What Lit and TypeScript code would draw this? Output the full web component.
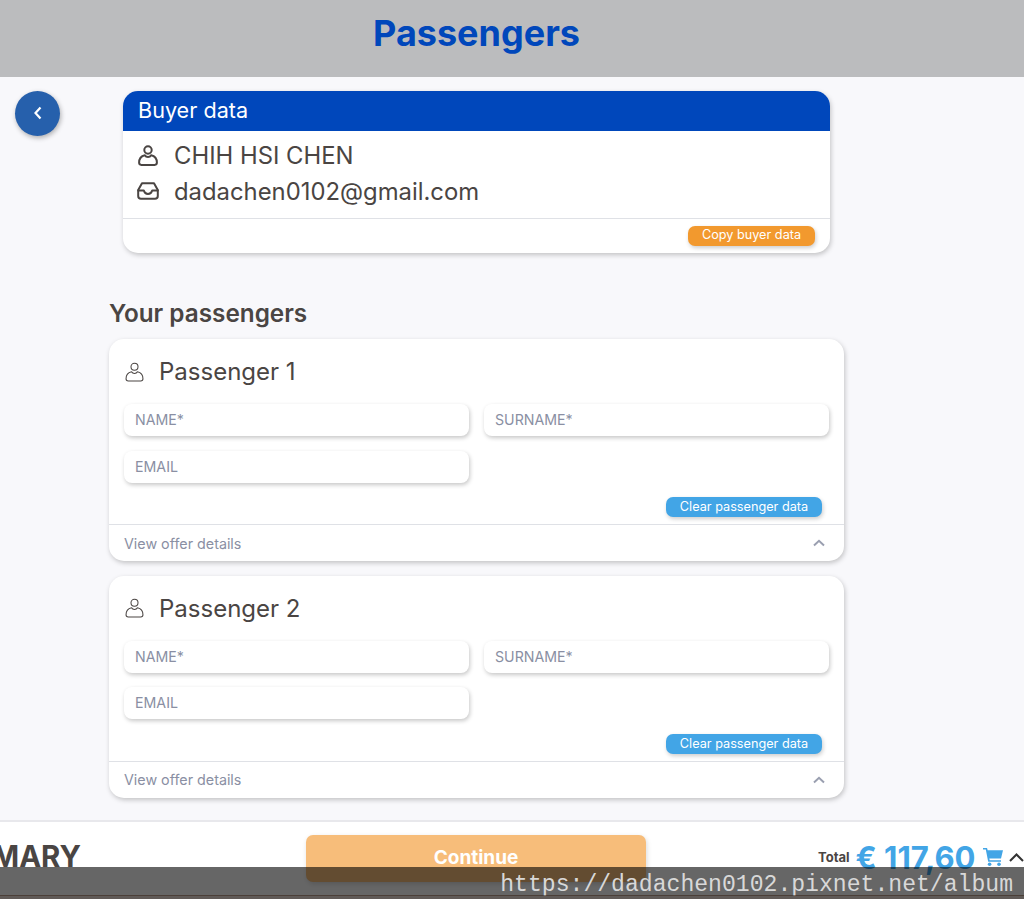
import { LitElement, html, css } from "lit";
import { customElement } from "lit/decorators.js";

const userIcon = (w: number, h: number, sw: number) => html`<svg class="ic" width=${w} height=${h} viewBox="0 0 20 21" fill="none" stroke="#4a4543" stroke-width=${sw} stroke-linejoin="round">
  <circle cx="10" cy="5" r="3.7"></circle>
  <path d="M6.9 10.2 C3.4 11 1.1 13.8 1.1 17.6 Q1.1 19.9 3.4 19.9 H16.6 Q18.9 19.9 18.9 17.6 C18.9 13.8 16.6 11 13.1 10.2 C11.8 12.6 8.2 12.6 6.9 10.2 Z"></path>
</svg>`;

const inboxIcon = html`<svg class="ic" width="22" height="18" viewBox="0 0 22 18" fill="none" stroke="#4a4543" stroke-width="2" stroke-linejoin="round" stroke-linecap="round">
  <path d="M5 1.2 H17 L20.8 8 V14 Q20.8 16.8 18 16.8 H4 Q1.2 16.8 1.2 14 V8 Z"></path>
  <path d="M1.2 8.5 H6.8 Q7.8 12 11 12 Q14.2 12 15.2 8.5 H20.8"></path>
</svg>`;

const chevUp = html`<svg width="12" height="8" viewBox="0 0 12 8" fill="none" stroke="#9a9fb0" stroke-width="2"><path d="M1 6.5 L6 1.8 L11 6.5"></path></svg>`;

const cartIcon = html`<svg width="20" height="18" viewBox="0 0 20 18" fill="#42a5e6">
  <path d="M0 0 H4 L4.7 2.2 H20 L18 10.5 H6.3 L6.7 12.2 H18 V13.8 H5.2 L2.8 1.6 H0 Z"></path>
  <circle cx="6.6" cy="16.2" r="1.8"></circle><circle cx="16" cy="16.2" r="1.8"></circle>
</svg>`;

@customElement("app-root")
export class AppRoot extends LitElement {
  static styles = css`
    :host { display: block; position: relative; height: 899px; overflow: hidden; background: #f8f8fb; color: #4a4543; font-family: Inter, "Liberation Sans", sans-serif; }
    .top { height: 77px; background: #bbbcbe; display: flex; align-items: center; justify-content: center; padding-right: 71px; padding-bottom: 11px; box-sizing: border-box; }
    .top h1 { margin: 0; font-size: 36px; font-weight: 700; color: #0047bb; line-height: 42px; }
    .main { display: flex; height: 743px; padding-top: 14px; box-sizing: border-box; }
    .gutter { width: 109px; padding-left: 15px; box-sizing: border-box; flex: none; }
    .back { width: 45px; height: 45px; border-radius: 50%; background: #2660ac; box-shadow: 1px 2px 5px rgba(0,0,0,.3); display: flex; align-items: center; justify-content: center; padding-bottom: 2px; box-sizing: border-box; }
    .col { width: 735px; flex: none; display: flex; flex-direction: column; }
    .buyer { margin: 0 14px; height: 162px; background: #fff; border-radius: 15px; box-shadow: 1px 2px 5px rgba(0,0,0,.22); overflow: hidden; display: flex; flex-direction: column; }
    .buyer-h { height: 40px; background: #0047bb; color: #fff; font-size: 21.6px; line-height: 39px; padding-left: 15px; }
    .buyer-b { flex: none; height: 88px; padding: 6px 15px 0; box-sizing: border-box; border-bottom: 1px solid #dfe1e6; }
    .line { display: flex; align-items: center; height: 36px; font-size: 23.85px; gap: 14px; }
    .line .slot { width: 22px; display: flex; justify-content: center; flex: none; margin-right: 1px; margin-left: -1px; }
    .buyer-f { flex: 1; display: flex; justify-content: flex-end; padding: 7px 15px 0 0; }
    .btn { height: 20px; border-radius: 7px; color: #fff; font-size: 12.7px; line-height: 18px; box-shadow: 1px 2px 4px rgba(0,0,0,.2); text-align: center; white-space: nowrap; }
    .orange { background: #f2992e; width: 127px; }
    .blue { background: #42a5e6; width: 156px; line-height: 19px; }
    h2 { margin: 45px 0 11px; font-size: 24.3px; line-height: 30px; font-weight: 600; }
    .card { background: #fff; border-radius: 15px; box-shadow: 1px 2px 5px rgba(0,0,0,.22); height: 222px; margin-bottom: 14.6px; display: flex; flex-direction: column; overflow: hidden; }
    .card-h { height: 65px; display: flex; align-items: center; padding-left: 16px; gap: 15px; font-size: 24px; flex: none; }
    .card-h .slot { width: 19px; display: flex; flex: none; }
    .fields { display: grid; grid-template-columns: 345px 345px; gap: 14.5px 15px; padding: 0 15px; }
    .field { height: 32px; border-radius: 8px; background: #fff; box-shadow: 1px 2px 4px rgba(0,0,0,.22); padding-left: 11px; font-size: 14.2px; line-height: 32.6px; color: #8a8fa3; }
    .act { display: flex; justify-content: flex-end; padding: 14.5px 22px 0 0; height: 41.5px; box-sizing: border-box; flex: none; }
    .offer { flex: 1; border-top: 1px solid #dfe1e6; display: flex; align-items: center; justify-content: space-between; padding: 0 19px 0 15px; font-size: 14.3px; color: #8a8fa3; }
    .foot { height: 79px; background: #fff; border-top: 2px solid #e8e8ec; box-sizing: border-box; display: flex; }
    .sum { width: 81px; flex: none; overflow: hidden; display: flex; justify-content: flex-end; font-size: 29.4px; font-weight: 700; line-height: 70px; white-space: nowrap; }
    .cta { margin: 13px 0 0 225px; width: 340px; height: 47px; background: #f7bd7a; border-radius: 7px; color: #fff; font-size: 19px; font-weight: 700; text-align: center; line-height: 46px; box-shadow: 1px 2px 5px rgba(0,0,0,.15); flex: none; }
    .total { margin-left: 172px; display: flex; align-items: center; height: 70px; white-space: nowrap; flex: none; }
    .total b { font-size: 13px; font-weight: 700; }
    .price { font-size: 31px; font-weight: 700; color: #42a5e6; margin: 0 8px 0 6px; }
    .cart { flex: none; display: flex; }
    .caret { flex: none; margin-left: 6px; }
    .mark { position: absolute; left: 0; right: 0; bottom: 0; height: 32px; background: rgba(0,0,0,.6); color: #d8d8d8; font-family: "Liberation Mono", monospace; font-size: 23.1px; line-height: 36px; text-align: right; padding-right: 11px; box-sizing: border-box; white-space: nowrap; }
    .mark::after { content: ""; position: absolute; left: 0; right: 0; bottom: 0; height: 4px; border-top: 1px solid rgba(50,30,20,.45); background: rgba(70,40,20,.18); box-sizing: border-box; }
  `;

  private passenger(n: number) {
    return html`<section class="card">
      <div class="card-h"><span class="slot">${userIcon(19, 20, 1.1)}</span>Passenger ${n}</div>
      <div class="fields">
        <div class="field">NAME*</div>
        <div class="field">SURNAME*</div>
        <div class="field">EMAIL</div>
      </div>
      <div class="act"><div class="btn blue">Clear passenger data</div></div>
      <div class="offer"><span>View offer details</span>${chevUp}</div>
    </section>`;
  }

  render() {
    return html`
      <header class="top"><h1>Passengers</h1></header>
      <div class="main">
        <div class="gutter"><div class="back"><svg width="10" height="14" viewBox="0 0 10 14" fill="none" stroke="#fff" stroke-width="2.2"><path d="M7.5 1.5 L2.5 7 L7.5 12.5"></path></svg></div></div>
        <div class="col">
          <section class="buyer">
            <div class="buyer-h">Buyer data</div>
            <div class="buyer-b">
              <div class="line"><span class="slot">${userIcon(20, 21, 2)}</span>CHIH HSI CHEN</div>
              <div class="line"><span class="slot">${inboxIcon}</span>dadachen0102@gmail.com</div>
            </div>
            <div class="buyer-f"><div class="btn orange">Copy buyer data</div></div>
          </section>
          <h2>Your passengers</h2>
          ${this.passenger(1)}
          ${this.passenger(2)}
        </div>
      </div>
      <footer class="foot">
        <div class="sum"><span>SUMMARY</span></div>
        <div class="cta">Continue</div>
        <div class="total">
          <b>Total</b><span class="price">€ 117,60</span><span class="cart">${cartIcon}</span>
          <svg class="caret" width="15" height="9" viewBox="0 0 15 9" fill="none" stroke="#333" stroke-width="2"><path d="M1 8 L7.5 1.5 L14 8"></path></svg>
        </div>
      </footer>
      <div class="mark">https://dadachen0102.pixnet.net/album</div>
    `;
  }
}
